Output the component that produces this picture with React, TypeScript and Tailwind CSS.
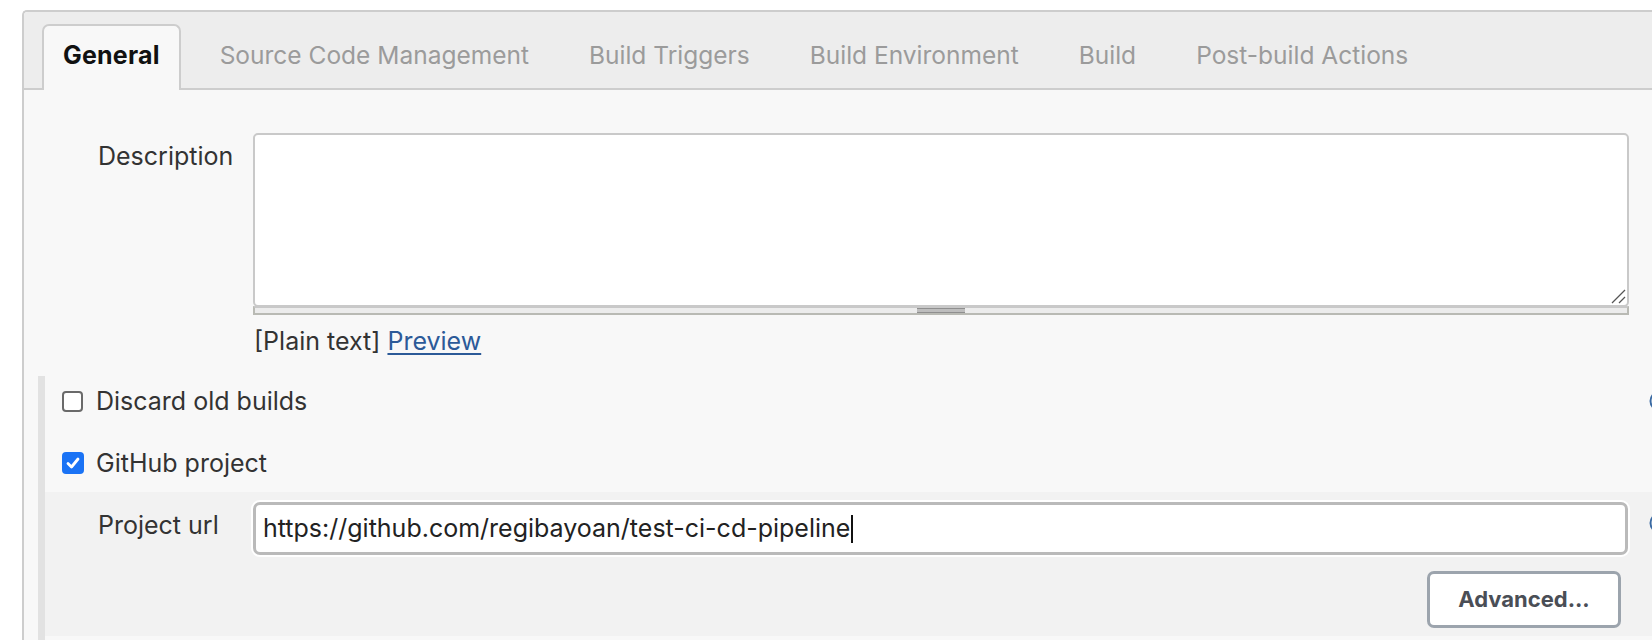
import React from "react";

const font = { fontFamily: "Inter, 'Noto Sans', sans-serif" };

function HelpIcon({ className = "" }: { className?: string }) {
  return (
    <svg className={"shrink-0 " + className} width="22" height="22" viewBox="0 0 22 22">
      <circle cx="11" cy="11" r="9.5" fill="none" stroke="#3a6aa3" strokeWidth="2" />
    </svg>
  );
}

export default function App() {
  const tabs = ["Source Code Management", "Build Triggers", "Build Environment", "Build", "Post-build Actions"];
  return (
    <div className="w-[1652px] h-[640px] overflow-hidden bg-white pt-[10px]" style={font}>
      <div className="ml-[22px] w-[1700px] h-[640px] border-t-2 border-l-2 border-[#cdcdcd] rounded-tl-[5px] bg-[#f8f8f8]">
        {/* Tab bar */}
        <div className="h-[78px] bg-[#ededed] border-b-2 border-[#cdcdcd] flex items-end pl-[18px] gap-[18px] rounded-tl-[4px]">
          <div className="h-[66px] -mb-[2px] bg-[#f8f8f8] border-2 border-b-0 border-[#cdcdcd] rounded-t-[7px] px-[19px] flex items-center pb-[4px]">
            <span className="text-[25px] font-bold text-[#111] tracking-[0.2px]">General</span>
          </div>
          {tabs.map((t) => (
            <div key={t} className="h-[66px] -mb-[2px] px-[21px] flex items-center pb-[4px]">
              <span className="text-[24.5px] text-[#9b9b9b]">{t}</span>
            </div>
          ))}
        </div>

        {/* Description */}
        <div className="pl-[74px] pt-[43px] flex">
          <div className="w-[155px] shrink-0 text-[25px] leading-[30px] text-[#333] pt-[8px]">Description</div>
          <div className="w-[1376px]">
            <div className="relative h-[174px] bg-white border-2 border-[#c9c9c9] rounded-[5px]">
              <svg className="absolute right-[1px] bottom-[1px]" width="16" height="16" viewBox="0 0 16 16">
                <line x1="2" y1="15" x2="15" y2="2" stroke="#555" strokeWidth="1.3" />
                <line x1="9" y1="15" x2="15" y2="9" stroke="#555" strokeWidth="1.3" />
              </svg>
            </div>
            <div className="-mt-[1px] h-[9px] bg-[#ececec] border-2 border-t-[#c8c8c8] border-b-[#b9bab4] border-l-[#b9bab4] border-r-[#b9bab4] flex justify-center">
              <div className="w-[48px] h-[5px] border-y border-[#8f8f8f] bg-[#bdbdbd]" />
            </div>
            <div className="mt-[11px] text-[25px] leading-[30px] text-[#333] pl-[1px]">
              [Plain text]{" "}
              <span className="text-[#2c5a98] underline underline-offset-[3px]">Preview</span>
            </div>
          </div>
        </div>

        {/* Options section */}
        <div className="mt-[20px] ml-[14px] w-[1633px] border-l-[7px] border-[#e2e2e2] h-[300px]">
          <div className="pt-[10px] pl-[17px]">
            <div className="flex items-center h-[30px]">
              <div className="w-[21px] h-[21px] rounded-[4px] border-2 border-[#6a6a6a] bg-white shrink-0" />
              <span className="ml-[13px] text-[25px] leading-[30px] text-[#333]">Discard old builds</span>
              <HelpIcon className="ml-auto" />
            </div>
            <div className="flex items-center h-[30px] mt-[32px]">
              <div className="w-[22px] h-[22px] rounded-[4px] bg-[#1a73f5] shrink-0 flex items-center justify-center">
                <svg width="16" height="16" viewBox="0 0 16 16">
                  <path d="M3 8.5 L6.5 12 L13 4" fill="none" stroke="white" strokeWidth="2.8" strokeLinecap="round" strokeLinejoin="round" />
                </svg>
              </div>
              <span className="ml-[12px] text-[25px] leading-[30px] text-[#333]">GitHub project</span>
            </div>
          </div>

          {/* Nested block */}
          <div className="mt-[14px] bg-[#f2f2f2] pl-[53px] pt-[8px] pb-[8px]">
            <div className="flex">
              <div className="w-[155px] shrink-0 text-[25px] leading-[30px] text-[#333] pt-[10px]">Project url</div>
              <div className="w-[1375px] h-[53px] mt-[2px] bg-white border-[3px] border-[#bababa] rounded-[7px] shadow-[0_0_0_2px_#ffffff] flex items-center pl-[7px]">
                <span className="text-[25px] text-[#222]">https://github.com/regibayoan/test-ci-cd-pipeline</span>
                <span className="ml-[1px] w-[2px] h-[28px] bg-[#111]" />
              </div>
              <div className="ml-auto pt-[12px]">
                <HelpIcon />
              </div>
            </div>
            <div className="w-[1530px] flex justify-end mt-[16px]">
              <div className="mr-[7px] w-[194px] h-[57px] bg-white border-[3px] border-[#9ca4ad] rounded-[7px] flex items-center justify-center">
                <span className="text-[22px] font-bold text-[#4a4e56]">Advanced...</span>
              </div>
            </div>
          </div>
        </div>
      </div>
    </div>
  );
}
